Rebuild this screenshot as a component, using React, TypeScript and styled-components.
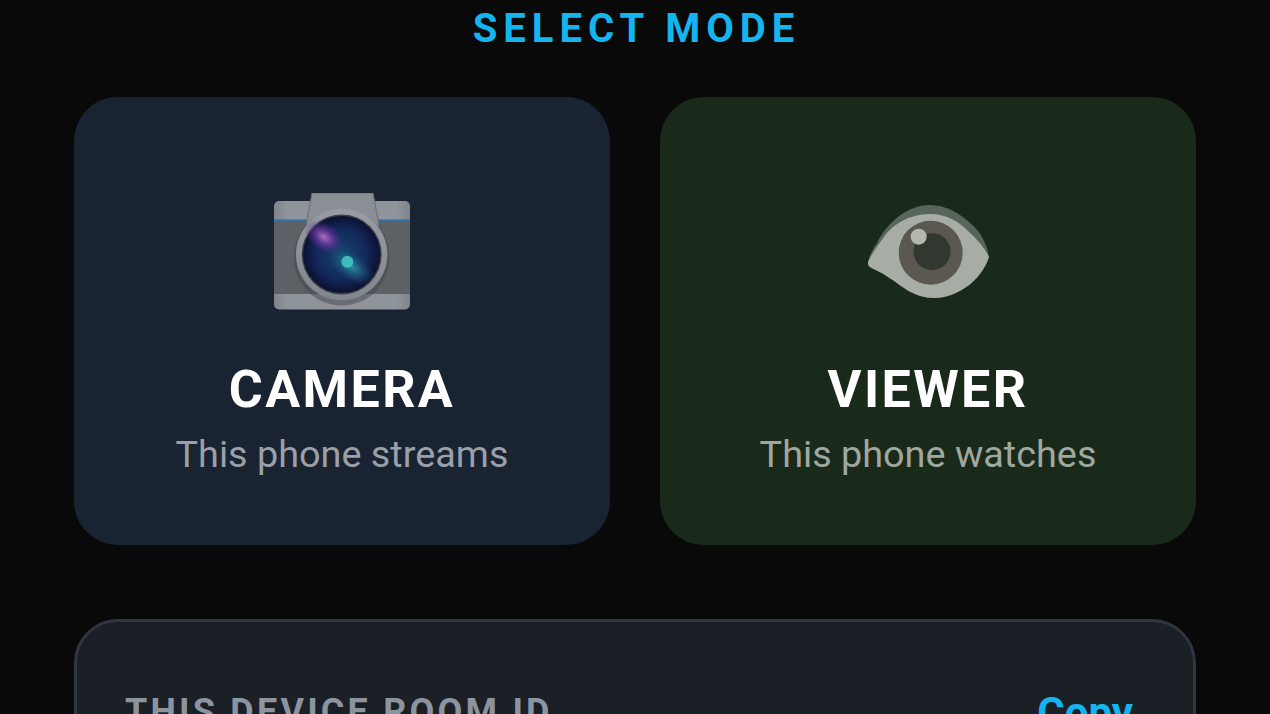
import styled, { createGlobalStyle } from 'styled-components';

const GlobalStyle = createGlobalStyle`
  html, body {
    margin: 0;
    height: 100%;
    background: #090909;
    overflow: hidden;
  }
`;

const Screen = styled.main`
  box-sizing: border-box;
  width: 1270px;
  height: 714px;
  overflow: hidden;
  padding: 0 74px;
  display: flex;
  flex-direction: column;
  font-family: Roboto, 'Liberation Sans', sans-serif;
  background: #090909;
`;

const Title = styled.h1`
  margin: 0;
  padding: 7px 0 0 3px;
  height: 97px;
  flex-shrink: 0;
  box-sizing: border-box;
  text-align: center;
  font-size: 40px;
  line-height: 44px;
  font-weight: 700;
  letter-spacing: 6px;
  color: #14b4ee;
`;

const ModeGrid = styled.div`
  display: grid;
  grid-template-columns: 536px 536px;
  gap: 50px;
  flex-shrink: 0;
`;

const ModeCard = styled.button<{ $tone: string; $hint: string }>`
  height: 448px;
  box-sizing: border-box;
  border: 0;
  border-radius: 44px;
  padding: 96px 0 0;
  background: ${(p) => p.$tone};
  display: flex;
  flex-direction: column;
  align-items: center;
  font-family: inherit;
  color: #fff;

  span {
    color: ${(p) => p.$hint};
  }
`;

const IconSlot = styled.div`
  height: 117px;
  display: flex;
  align-items: center;
  justify-content: center;

  svg {
    filter: blur(0.6px);
  }
`;

const ModeName = styled.strong`
  margin-top: 52px;
  font-size: 52px;
  line-height: 56px;
  font-weight: 700;
  letter-spacing: 2.4px;
`;

const ModeHint = styled.span`
  margin-top: 15px;
  font-size: 37.8px;
  line-height: 42px;
  font-weight: 400;
`;

const RoomPanel = styled.section`
  margin-top: 74px;
  box-sizing: border-box;
  height: 200px;
  flex-shrink: 0;
  border: 3px solid #30353f;
  border-radius: 44px;
  background: #1b1f26;
  padding: 69px 60px 0 48px;
  display: flex;
  justify-content: space-between;
  align-items: flex-start;
`;

const RoomLabel = styled.div`
  font-size: 36px;
  line-height: 42px;
  font-weight: 700;
  letter-spacing: 3.2px;
  color: #8c94a0;
`;

const CopyLink = styled.button`
  border: 0;
  padding: 0;
  background: none;
  font-family: inherit;
  font-size: 42px;
  line-height: 44px;
  font-weight: 700;
  color: #14b4ee;
`;

function CameraEmoji() {
  return (
    <svg width="136" height="117" viewBox="0 0 136 117" aria-hidden="true">
      <defs>
        <radialGradient id="lens" cx="50%" cy="50%" r="52%">
          <stop offset="0" stopColor="#14486f" />
          <stop offset="0.65" stopColor="#13265a" />
          <stop offset="1" stopColor="#0b0e2a" />
        </radialGradient>
        <radialGradient id="glowA">
          <stop offset="0" stopColor="#b873c4" stopOpacity="0.95" />
          <stop offset="0.5" stopColor="#6a35a0" stopOpacity="0.7" />
          <stop offset="1" stopColor="#4a2a90" stopOpacity="0" />
        </radialGradient>
        <radialGradient id="glowB">
          <stop offset="0" stopColor="#3fc7c4" />
          <stop offset="1" stopColor="#1c6f90" stopOpacity="0" />
        </radialGradient>
        <linearGradient id="ring" x1="0" y1="0" x2="0" y2="1">
          <stop offset="0" stopColor="#989ca3" />
          <stop offset="1" stopColor="#81858c" />
        </linearGradient>
        <linearGradient id="plate" x1="0" y1="0" x2="1" y2="0">
          <stop offset="0" stopColor="#7f838a" />
          <stop offset="0.1" stopColor="#8f939a" />
          <stop offset="0.9" stopColor="#8f939a" />
          <stop offset="1" stopColor="#7f838a" />
        </linearGradient>
      </defs>
      <rect x="0" y="8" width="136" height="108.5" rx="5" fill="url(#plate)" />
      <rect x="0" y="28" width="136" height="73" fill="#5d6065" />
      <rect x="0" y="26.5" width="136" height="2.5" fill="#2f6ea8" />
      <path d="M38 0h61l5 27 2 20H31l2-20z" fill="#8a8e95" stroke="#6c7076" strokeWidth="1" />
      <circle cx="67.7" cy="64.5" r="48" fill="#44474c" opacity="0.5" />
      <circle cx="67.7" cy="61.5" r="45.7" fill="url(#ring)" />
      <circle cx="67.7" cy="61.5" r="40" fill="#3a3d45" />
      <circle cx="67.7" cy="61.5" r="38.6" fill="url(#lens)" />
      <ellipse cx="50" cy="44" rx="22" ry="14" fill="url(#glowA)" transform="rotate(35 50 44)" />
      <ellipse cx="78" cy="74" rx="26" ry="14" fill="url(#glowB)" opacity="0.6" transform="rotate(35 78 74)" />
      <circle cx="73.3" cy="68.7" r="6" fill="#48cfcf" opacity="0.8" />
    </svg>
  );
}

function EyeEmoji() {
  return (
    <svg width="122" height="93" viewBox="0 0 122 93" aria-hidden="true">
      <path d="M1 57C3 49 6 44 10 38 20 18 40 0 63 0c20 0 38 14 48 26 6 8 10 18 11 26-8 24-32 41-55 41-20 0-32-12-43-19C16 68 8 65 3 62c-2-1-2-3-2-5z" fill="#58655b" />
      <path d="M1 57C5 48 10 42 17 32 25 20 42 9 63 9c16 0 28 7 37 16 10 9 18 18 22 27-8 24-32 41-55 41-20 0-32-12-43-19C16 68 8 65 3 62c-2-1-2-3-2-5z" fill="#a7ada4" />
      <circle cx="63.7" cy="47.7" r="32" fill="#5a584f" />
      <circle cx="65" cy="46.7" r="18.5" fill="#32372f" />
      <circle cx="51.7" cy="31.7" r="8" fill="#b4b8ae" />
    </svg>
  );
}

export default function App() {
  return (
    <>
      <GlobalStyle />
      <Screen>
        <Title>SELECT MODE</Title>
        <ModeGrid>
          <ModeCard $tone="#1a2332" $hint="#9aa0a8">
            <IconSlot>
              <CameraEmoji />
            </IconSlot>
            <ModeName>CAMERA</ModeName>
            <ModeHint>This phone streams</ModeHint>
          </ModeCard>
          <ModeCard $tone="#1a2a1a" $hint="#9fa8a0">
            <IconSlot>
              <EyeEmoji />
            </IconSlot>
            <ModeName>VIEWER</ModeName>
            <ModeHint>This phone watches</ModeHint>
          </ModeCard>
        </ModeGrid>
        <RoomPanel>
          <RoomLabel>THIS DEVICE ROOM ID</RoomLabel>
          <CopyLink>Copy</CopyLink>
        </RoomPanel>
      </Screen>
    </>
  );
}
